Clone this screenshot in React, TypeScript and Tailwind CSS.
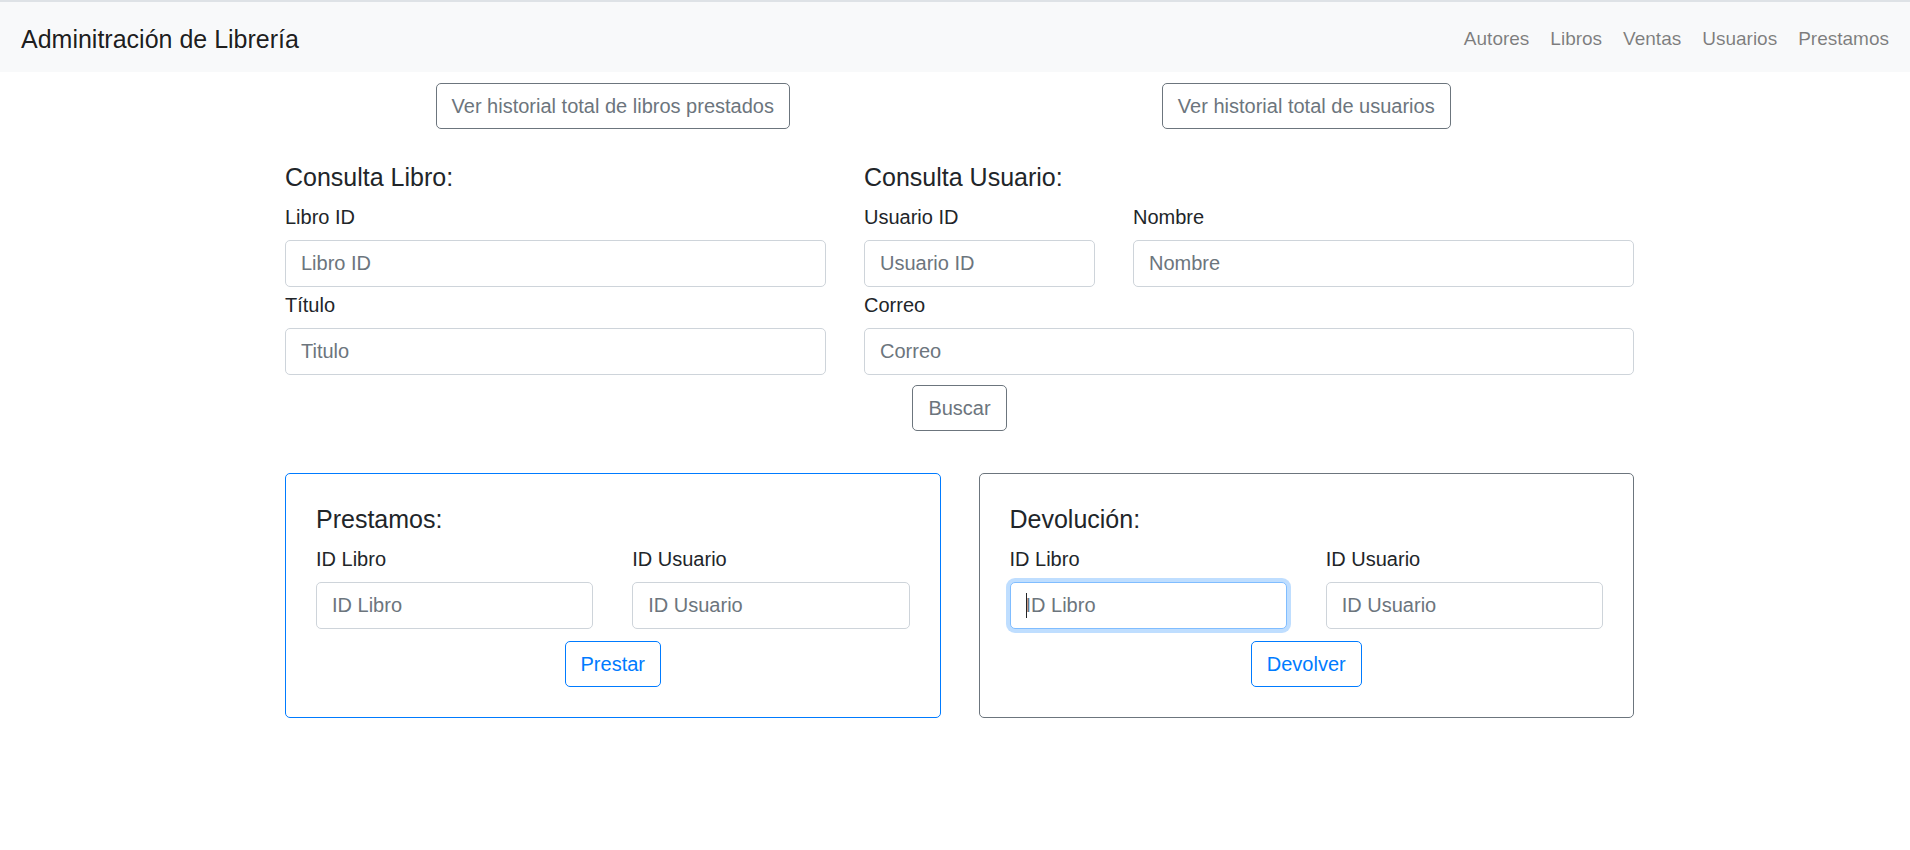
import type { ReactNode } from 'react';

const inputBase =
  'block h-[47px] w-full rounded-[5px] border bg-white px-[15px] text-[20px] text-[#495057] outline-none placeholder:text-[#6c757d]';

function Field({
  label,
  placeholder,
  focused = false,
}: {
  label: string;
  placeholder: string;
  focused?: boolean;
}) {
  return (
    <div>
      <label className="mb-[8px] block text-[20px] leading-[30px]">{label}</label>
      <div className="relative">
        <input
          type="text"
          placeholder={placeholder}
          className={
            focused
              ? `${inputBase} border-[#80bdff] shadow-[0_0_0_4px_rgba(0,123,255,0.25)]`
              : `${inputBase} border-[#ced4da]`
          }
        />
        {/* static caret for the focused field */}
        {focused && (
          <span className="pointer-events-none absolute left-[16px] top-[11px] h-[25px] w-px bg-[#212529]" />
        )}
      </div>
    </div>
  );
}

function OutlineButton({
  children,
  primary = false,
}: {
  children: ReactNode;
  primary?: boolean;
}) {
  return (
    <button
      type="button"
      className={
        primary
          ? 'h-[46px] rounded-[5px] border border-[#007bff] px-[15px] text-[20px] text-[#007bff]'
          : 'h-[46px] rounded-[5px] border border-[#6c757d] px-[15px] text-[20px] text-[#6c757d]'
      }
    >
      {children}
    </button>
  );
}

function ActionCard({
  title,
  action,
  primary = false,
  focusFirst = false,
}: {
  title: string;
  action: string;
  primary?: boolean;
  focusFirst?: boolean;
}) {
  return (
    <div
      className={
        primary
          ? 'flex-1 rounded-[5px] border border-[#007bff] p-[30px]'
          : 'flex-1 rounded-[5px] border border-[#6c757d] p-[30px]'
      }
    >
      <h5 className="mb-[10px] text-[25px] leading-[30px]">{title}</h5>
      <div className="grid grid-cols-2 gap-x-[39px]">
        <Field label="ID Libro" placeholder="ID Libro" focused={focusFirst} />
        <Field label="ID Usuario" placeholder="ID Usuario" />
      </div>
      <div className="mt-[12px] flex justify-center">
        <OutlineButton primary>{action}</OutlineButton>
      </div>
    </div>
  );
}

export default function App() {
  const links = ['Autores', 'Libros', 'Ventas', 'Usuarios', 'Prestamos'];

  return (
    <div className="min-h-[850px] bg-white font-['Liberation_Sans',Arial,sans-serif] text-[#212529]">
      <div className="h-[2px] bg-[#dee2e6]" />
      <nav className="flex h-[70px] items-center justify-between bg-[#f8f9fa] pl-[21px] pr-[21px] pt-[3px]">
        <span className="text-[25px] leading-[30px] text-black/90">Adminitración de Librería</span>
        <ul className="flex gap-[21px] text-[19px] leading-[30px] text-black/50">
          {links.map((l) => (
            <li key={l}>{l}</li>
          ))}
        </ul>
      </nav>

      <main className="ml-[266px] w-[1387px]">
        <div className="mt-[11px] flex">
          <div className="flex w-1/2 justify-center">
            <OutlineButton>Ver historial total de libros prestados</OutlineButton>
          </div>
          <div className="flex w-1/2 justify-center">
            <OutlineButton>Ver historial total de usuarios</OutlineButton>
          </div>
        </div>

        <div className="mt-[33px] flex gap-[38px] px-[19px]">
          <div className="w-[541px]">
            <h5 className="mb-[10px] text-[25px] leading-[30px]">Consulta Libro:</h5>
            <Field label="Libro ID" placeholder="Libro ID" />
            <div className="mt-[3px]">
              <Field label="Título" placeholder="Titulo" />
            </div>
          </div>
          <div className="flex-1">
            <h5 className="mb-[10px] text-[25px] leading-[30px]">Consulta Usuario:</h5>
            <div className="flex gap-[38px]">
              <div className="w-[231px]">
                <Field label="Usuario ID" placeholder="Usuario ID" />
              </div>
              <div className="flex-1">
                <Field label="Nombre" placeholder="Nombre" />
              </div>
            </div>
            <div className="mt-[3px]">
              <Field label="Correo" placeholder="Correo" />
            </div>
          </div>
        </div>

        <div className="mt-[10px] flex justify-center">
          <OutlineButton>Buscar</OutlineButton>
        </div>

        <div className="mt-[42px] flex gap-[38px] px-[19px]">
          <ActionCard title="Prestamos:" action="Prestar" primary />
          <ActionCard title="Devolución:" action="Devolver" focusFirst />
        </div>
      </main>
    </div>
  );
}
